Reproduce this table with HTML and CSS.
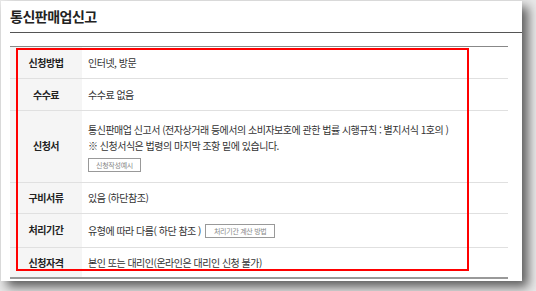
FILE: index.html
```html
<!DOCTYPE html>
<html lang="ko">
<head>
<meta charset="utf-8">
<link rel="stylesheet" href="styles.css">
</head>
<body>
<div class="card">
  <h2 class="title">통신판매업신고</h2>
  <table class="info">
    <tr class="r1"><th>신청방법</th><td>인터넷, 방문</td></tr>
    <tr class="r2"><th>수수료</th><td>수수료 없음</td></tr>
    <tr class="r3"><th>신청서</th><td class="multi">
      <p>통신판매업 신고서 (전자상거래 등에서의 소비자보호에 관한 법률 시행규칙 : 별지서식 1호의 )</p>
      <p>※ 신청서식은 법령의 마지막 조항 밑에 있습니다.</p>
      <span class="btn btn-wide">신청작성예시</span>
    </td></tr>
    <tr class="r4"><th>구비서류</th><td>있음 (하단참조)</td></tr>
    <tr class="r5"><th>처리기간</th><td><span class="inline">유형에 따라 다름( 하단 참조 )</span><span class="btn">처리기간 계산 방법</span></td></tr>
    <tr class="r6"><th>신청자격</th><td>본인 또는 대리인(온라인은 대리인 신청 불가)</td></tr>
  </table>
  <div class="highlight"></div>
</div>
</body>
</html>
```
FILE: styles.css
```css
html, body {
  margin: 0;
  padding: 0;
}
body {
  background: #e8e8e8;
  padding: 1px;
  width: 536px;
  height: 291px;
  box-sizing: border-box;
  overflow: hidden;
  font-family: "Noto Sans CJK KR", "Noto Sans", sans-serif;
  color: #333;
}
.card {
  position: relative;
  width: 521px;
  height: 280px;
  background: #fff;
  padding-left: 9px;
  box-sizing: border-box;
  box-shadow: 6px 6px 10px rgba(0, 0, 0, 0.6);
}
.title {
  margin: 0;
  height: 32px;
  box-sizing: border-box;
  padding-top: 6px;
  font-size: 14px;
  line-height: 18px;
  font-weight: 700;
  color: #222;
  letter-spacing: -0.5px;
  border-bottom: 1px solid #555;
}
.info {
  margin-top: 13px;
  width: 498px;
  border-collapse: collapse;
  border-top: 1px solid #888;
  border-bottom: 2px solid #999;
  font-size: 10px;
  line-height: 16px;
}
.info th, .info td {
  padding: 0 6px;
  border-bottom: 1px solid #e0e0e0;
  vertical-align: middle;
}
.info th {
  width: 60px;
  background: #f5f5f5;
  font-weight: 700;
  color: #222;
  text-align: center;
  letter-spacing: -0.5px;
}
.info td {
  text-align: left;
  color: #333;
  letter-spacing: -0.5px;
}
.r1 { height: 32px; }
.r2 { height: 32px; }
.r3 { height: 71px; }
.r4 { height: 31px; }
.r5 { height: 34px; }
.r6 { height: 31px; }
.info td.multi {
  padding-top: 11px;
  padding-bottom: 10px;
}
.multi p {
  margin: 0;
}
.btn {
  display: inline-block;
  border: 1px solid #999;
  background: #fff;
  font-size: 7px;
  line-height: 12px;
  color: #888;
  padding: 0 8px;
  letter-spacing: -0.3px;
  vertical-align: middle;
}
.btn-wide {
  margin-top: 3px;
  width: 53px;
  box-sizing: border-box;
  text-align: center;
  padding: 0;
}
.inline {
  vertical-align: middle;
  margin-right: 4px;
}
.highlight {
  position: absolute;
  left: 15px;
  top: 47px;
  width: 453px;
  height: 223px;
  border: 2px solid #f00;
  box-sizing: border-box;
  pointer-events: none;
}
```
